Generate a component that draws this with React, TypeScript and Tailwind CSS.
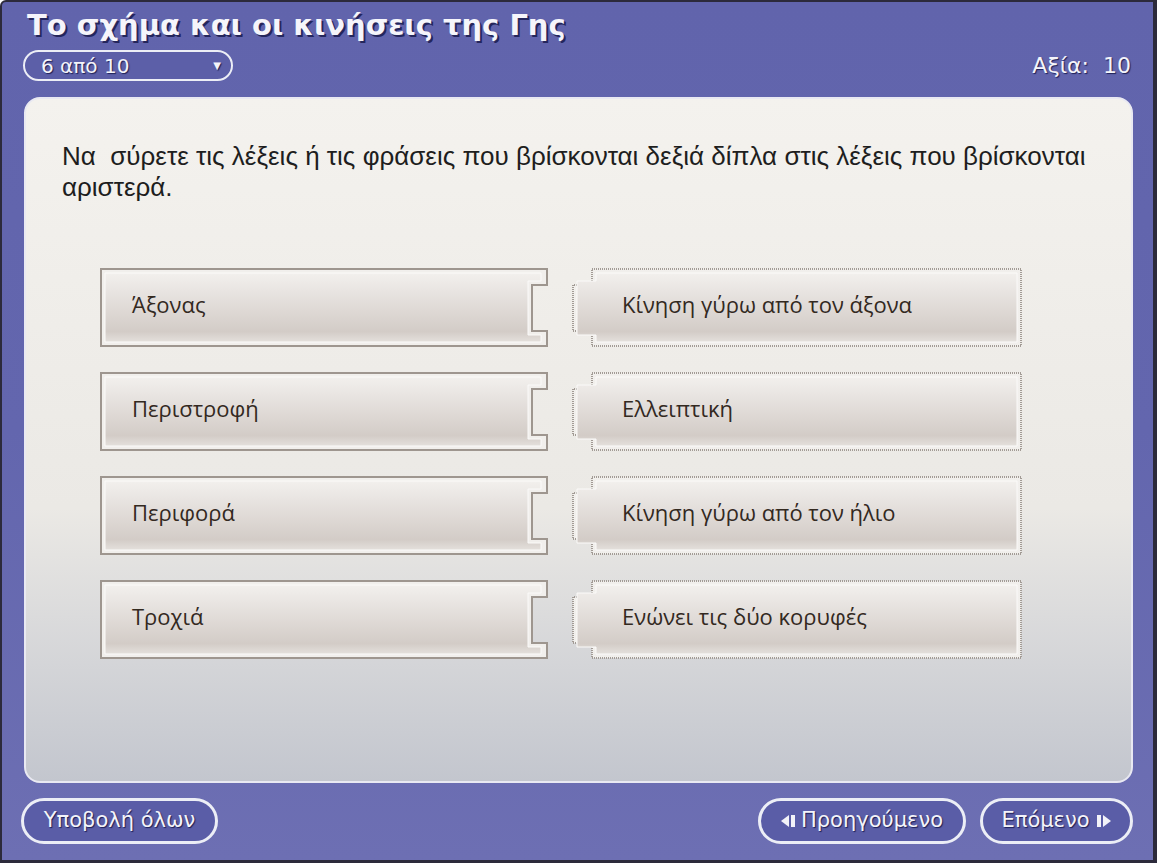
import React from 'react';

const leftItems = ['Άξονας', 'Περιστροφή', 'Περιφορά', 'Τροχιά'];
const rightItems = [
  'Κίνηση γύρω από τον άξονα',
  'Ελλειπτική',
  'Κίνηση γύρω από τον ήλιο',
  'Ενώνει τις δύο κορυφές',
];

const uiFont = { fontFamily: '"DejaVu Sans", Verdana, sans-serif' };
const cardFont = { fontFamily: '"Open Sans", "Noto Sans", sans-serif' };

function CardFill({ id }: { id: string }) {
  return (
    <defs>
      <linearGradient id={id} x1="0" y1="0" x2="0" y2="1">
        <stop offset="0" stopColor="#f2f0ed" />
        <stop offset="0.25" stopColor="#e9e5e2" />
        <stop offset="0.85" stopColor="#d3ccc7" />
        <stop offset="1" stopColor="#e4e0dc" />
      </linearGradient>
    </defs>
  );
}

function LeftCard({ label, idx }: { label: string; idx: number }) {
  const gid = `lg${idx}`;
  return (
    <div className="relative flex h-[79px] w-[448px] items-center pb-[7px] pl-[32px]">
      <svg className="absolute inset-0" width="448" height="79" viewBox="0 0 448 79">
        <CardFill id={gid} />
        <path d="M1 1 H447 V17 H432 V63 H447 V78 H1 Z" fill="#f1efec" stroke="#9e968f" strokeWidth="2" />
        <path d="M5 5 H441 V13 H428 V67 H441 V74 H5 Z" fill={`url(#${gid})`} stroke="#fbfaf9" strokeWidth="1" />
      </svg>
      <span className="relative text-[22px] text-[#33291f]" style={cardFont}>
        {label}
      </span>
    </div>
  );
}

function RightCard({ label, idx }: { label: string; idx: number }) {
  const gid = `rg${idx}`;
  return (
    <div className="relative flex h-[79px] w-[450px] items-center pb-[7px] pl-[50px]">
      <svg className="absolute inset-0" width="450" height="79" viewBox="0 0 450 79">
        <CardFill id={gid} />
        <path
          d="M20 1 H449 V78 H20 V63 H1 V17 H20 Z"
          fill="#f1efec"
          stroke="#a29b95"
          strokeWidth="2"
          strokeDasharray="1 1"
        />
        <path d="M24 5 H445 V74 H24 V67 H5 V13 H24 Z" fill={`url(#${gid})`} stroke="#fbfaf9" strokeWidth="1" />
      </svg>
      <span className="relative text-[22px] text-[#33291f]" style={cardFont}>
        {label}
      </span>
    </div>
  );
}

function PrevIcon() {
  return (
    <svg width="16" height="14" viewBox="0 0 16 14" className="mr-[4px]">
      <path d="M0 7 L8 1 V13 Z" fill="#f2f2f8" />
      <rect x="10" y="1" width="4" height="12" fill="#f2f2f8" />
    </svg>
  );
}

function NextIcon() {
  return (
    <svg width="16" height="14" viewBox="0 0 16 14" className="ml-[6px]">
      <rect x="1" y="1" width="4" height="12" fill="#f2f2f8" />
      <path d="M7 1 L15 7 L7 13 Z" fill="#f2f2f8" />
    </svg>
  );
}

function PillButton({ children, width }: { children: React.ReactNode; width: string }) {
  return (
    <button
      className={`flex h-[46px] ${width} items-center justify-center rounded-full border-[3px] border-[#eceef6] bg-[#5a5da7] text-[21px] text-[#f4f4fa] [text-shadow:1px_1px_1px_#1d1f55]`}
      style={uiFont}
    >
      {children}
    </button>
  );
}

export default function App() {
  return (
    <div className="flex h-[863px] w-[1157px] flex-col overflow-hidden rounded-tl-[6px] border-t-2 border-r-[4px] border-b-[3px] border-l-2 border-[#2c2a3b] bg-gradient-to-b from-[#6164ac] via-[#6366ae] to-[#6d6fb3]">
      <div className="flex h-[95px] flex-col px-[21px]">
        <h1
          className="mt-[5px] pl-[4px] text-[29px] font-bold leading-[37px] text-[#f5f5fb] [text-shadow:2px_2px_0_#24265c]"
          style={uiFont}
        >
          Το σχήμα και οι κινήσεις της Γης
        </h1>
        <div className="mt-[5px] flex items-center justify-between">
          <div
            className="flex h-[31px] w-[210px] items-center justify-between rounded-full border-2 border-[#eceef6] bg-[#5c5fa8] pr-[10px] pl-[16px] text-[20px] text-[#f4f4fa] [text-shadow:1px_1px_1px_#1d1f55]"
            style={uiFont}
          >
            <span>6 από 10</span>
            <span className="text-[10px]">▼</span>
          </div>
          <div
            className="pr-[1px] text-[22px] text-[#f4f4fa] [text-shadow:1px_1px_1px_#1d1f55]"
            style={uiFont}
          >
            Αξία:&nbsp;&nbsp;10
          </div>
        </div>
      </div>

      <div className="mr-[20px] ml-[22px] flex h-[686px] flex-col rounded-[16px] border-2 border-[#e9e9f2] bg-gradient-to-b from-[#f4f2ee] via-[#ebe9e5] via-60% to-[#c3c6ce] pt-[42px] pr-[14px] pl-[36px]">
        <p
          className="text-[26px] leading-[31px] text-[#1e1e1e]"
          style={{ fontFamily: '"Liberation Sans", Arial, sans-serif' }}
        >
          Να&nbsp; σύρετε τις λέξεις ή τις φράσεις που βρίσκονται δεξιά δίπλα στις λέξεις που βρίσκονται
          αριστερά.
        </p>
        <div className="mt-[65px] flex flex-col gap-[25px] pl-[38px]">
          {leftItems.map((l, i) => (
            <div key={l} className="flex items-center gap-[24px]">
              <LeftCard label={l} idx={i} />
              <RightCard label={rightItems[i]} idx={i} />
            </div>
          ))}
        </div>
      </div>

      <div className="mt-[15px] flex items-start justify-between pr-[20px] pl-[19px]">
        <PillButton width="w-[197px]">Υποβολή όλων</PillButton>
        <div className="flex gap-[14px]">
          <PillButton width="w-[208px]">
            <PrevIcon />
            Προηγούμενο
          </PillButton>
          <PillButton width="w-[153px]">
            Επόμενο
            <NextIcon />
          </PillButton>
        </div>
      </div>
    </div>
  );
}
